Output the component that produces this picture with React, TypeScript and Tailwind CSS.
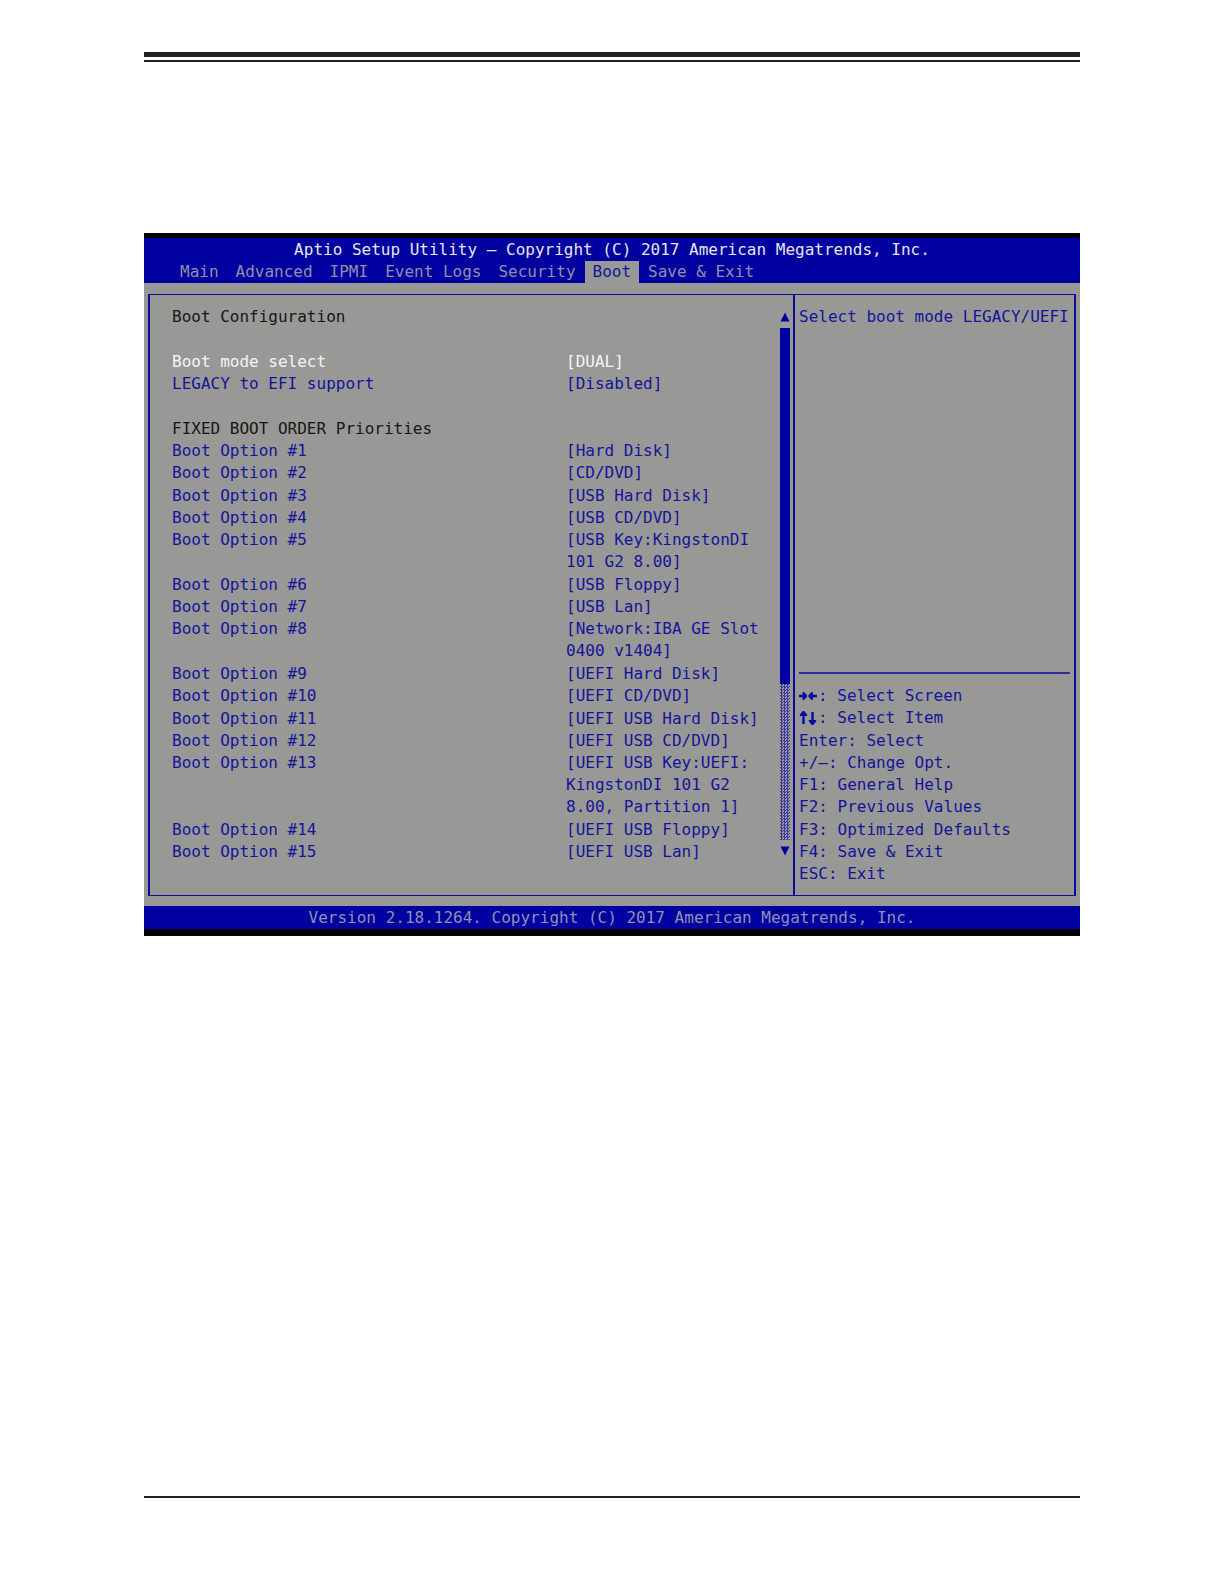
import clsx from "clsx";

type Row =
  | { kind: "blank" }
  | { kind: "heading"; text: string }
  | { kind: "option"; id: string; label: string; value: string[]; active?: boolean };

const tabs = ["Main", "Advanced", "IPMI", "Event Logs", "Security", "Boot", "Save & Exit"];

const bootOptions: string[][] = [
  ["[Hard Disk]"],
  ["[CD/DVD]"],
  ["[USB Hard Disk]"],
  ["[USB CD/DVD]"],
  ["[USB Key:KingstonDI", "101 G2 8.00]"],
  ["[USB Floppy]"],
  ["[USB Lan]"],
  ["[Network:IBA GE Slot", "0400 v1404]"],
  ["[UEFI Hard Disk]"],
  ["[UEFI CD/DVD]"],
  ["[UEFI USB Hard Disk]"],
  ["[UEFI USB CD/DVD]"],
  ["[UEFI USB Key:UEFI:", "KingstonDI 101 G2", "8.00, Partition 1]"],
  ["[UEFI USB Floppy]"],
  ["[UEFI USB Lan]"],
];

const rows: Row[] = [
  { kind: "heading", text: "Boot Configuration" },
  { kind: "blank" },
  { kind: "option", id: "boot-mode", label: "Boot mode select", value: ["[DUAL]"], active: true },
  { kind: "option", id: "legacy-efi", label: "LEGACY to EFI support", value: ["[Disabled]"] },
  { kind: "blank" },
  { kind: "heading", text: "FIXED BOOT ORDER Priorities" },
  ...bootOptions.map(
    (value, i): Row => ({
      kind: "option",
      id: `boot-option-${i + 1}`,
      label: `Boot Option #${i + 1}`,
      value,
    })
  ),
];

const keys = [
  "Enter: Select",
  "+/–: Change Opt.",
  "F1: General Help",
  "F2: Previous Values",
  "F3: Optimized Defaults",
  "F4: Save & Exit",
  "ESC: Exit",
];

function SettingRow({ row }: { row: Row }) {
  if (row.kind === "blank") {
    return <li className="h-[22px]" aria-hidden="true" />;
  }
  if (row.kind === "heading") {
    return <li className="text-[#161616]">{row.text}</li>;
  }
  return (
    <li className={clsx("grid grid-cols-[394px_1fr]", row.active && "text-[#f4f4f4]")}>
      <label htmlFor={row.id}>{row.label}</label>
      <button id={row.id} type="button" className="text-left">
        {row.value.map((line) => (
          <span key={line} className="block">
            {line}
          </span>
        ))}
      </button>
    </li>
  );
}

function ScrollBar() {
  return (
    <div className="mr-[3px] flex w-[10px] flex-col pt-[17px] pb-[39px]" aria-hidden="true">
      <svg viewBox="0 0 10 10" className="h-[10px] w-[10px]" fill="#0000a0">
        <path d="M5 0.5 L9.5 9.5 H0.5 Z" />
      </svg>
      <div className="mt-[6px] flex flex-1 flex-col">
        <div className="flex-[356] bg-[#0000a0]" />
        <div className="flex-[156] bg-[repeating-conic-gradient(#3838a0_0_25%,#989997_0_50%)] bg-[length:3px_3px]" />
      </div>
      <svg viewBox="0 0 10 10" className="mt-[6px] h-[10px] w-[10px]" fill="#0000a0">
        <path d="M0.5 0.5 H9.5 L5 9.5 Z" />
      </svg>
    </div>
  );
}

// Arrow glyphs of the key legend, two character cells wide
function LeftRightIcon() {
  return (
    <svg viewBox="0 0 19 12" className="h-3 w-[19px]" fill="#0a0a9c" aria-hidden="true">
      <path d="M0 4.8h3.6V2h1.4L8.2 5.2v1.6L5 10H3.6V7.2H0zM18 4.8h-4V2h-1.4L9.4 5.2v1.6L12.6 10H14V7.2h4z" />
    </svg>
  );
}

function UpDownIcon() {
  return (
    <svg viewBox="0 0 19 14" className="h-[14px] w-[19px]" fill="#0a0a9c" aria-hidden="true">
      <path d="M3.8 0h1.4L8.2 3.6v1.4H5.7V13H3.3V5H0.8V3.6zM12.8 14h1.4l3-3.6V9h-2.5V1h-2.4v8H9.8v1.4z" />
    </svg>
  );
}

export default function App() {
  return (
    <div className="flex min-h-screen flex-col bg-white px-36 pt-[52px] pb-[86px] font-['DejaVu_Sans_Mono','Liberation_Mono',monospace] text-base leading-[22px]">
      <div className="h-[10px] border-t-[5px] border-b-2 border-[#231f20]" />

      <main className="mt-[171px] border-t-[5px] border-b-[7px] border-black bg-[#989997] text-[#14149a]">
        <header className="bg-[#0000a0] pt-px">
          <h1 className="text-center text-[#e6e6e6]">
            Aptio Setup Utility – Copyright (C) 2017 American Megatrends, Inc.
          </h1>
          <nav className="flex gap-px pl-7">
            {tabs.map((tab) => (
              <button
                key={tab}
                type="button"
                className={clsx(
                  "px-2",
                  tab === "Boot" ? "bg-[#989997] text-[#14149a]" : "text-[#9090a8]"
                )}
              >
                {tab}
              </button>
            ))}
          </nav>
        </header>

        <div className="mx-1 mt-[11px] mb-[10px] flex border-x-2 border-y border-[#0c0c98]">
          <section className="flex flex-1">
            <ul className="flex min-h-[600px] flex-1 flex-col justify-between pt-[11px] pb-8 pl-[22px]">
              {rows.map((row, i) => (
                <SettingRow key={i} row={row} />
              ))}
            </ul>
            <ScrollBar />
          </section>

          <aside className="flex w-[281px] flex-col justify-between border-l-2 border-[#0c0c98] pt-[11px] pr-1 pb-[10px] pl-1 whitespace-nowrap">
            <p>Select boot mode LEGACY/UEFI</p>
            <ul className="flex min-h-[213px] flex-col justify-between border-t-2 border-[#2c2c9a] pt-[11px]">
              <li className="flex items-center">
                <LeftRightIcon />: Select Screen
              </li>
              <li className="flex items-center">
                <UpDownIcon />: Select Item
              </li>
              {keys.map((key) => (
                <li key={key}>{key}</li>
              ))}
            </ul>
          </aside>
        </div>

        <footer className="bg-[#0000a0] pt-px text-center text-[#9090b0]">
          Version 2.18.1264. Copyright (C) 2017 American Megatrends, Inc.
        </footer>
      </main>

      <div className="mt-auto border-b-2 border-[#231f20]" />
    </div>
  );
}
